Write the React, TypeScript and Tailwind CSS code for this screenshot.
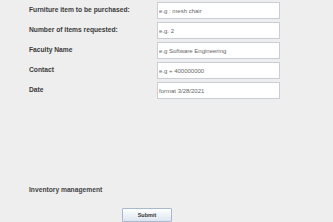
import React from "react";

const FIELDS = [
  { label: "Furniture item to be purchased:", placeholder: "e.g : mesh chair" },
  { label: "Number of items requested:", placeholder: "e.g. 2" },
  { label: "Faculty Name", placeholder: "e.g Software Engineering" },
  { label: "Contact", placeholder: "e.g + 400000000" },
  { label: "Date", placeholder: "format 3/28/2021" },
];

export default function App() {
  return (
    <div className="w-[333px] h-[222px] overflow-hidden bg-[#eeeeee] font-['Liberation_Sans',Arial,sans-serif]">
      <div className="flex flex-col gap-[3px] pt-[2px]">
        {FIELDS.map((f) => (
          <div key={f.label} className="flex items-center h-[17px]">
            <label className="w-[157px] pl-[29px] text-[6.7px] font-bold text-[#3a3a3a] whitespace-nowrap">
              {f.label}
            </label>
            <input
              type="text"
              placeholder={f.placeholder}
              className="w-[123px] h-[17px] bg-white border border-[#c9ced6] px-[1px] text-[6px] text-[#555] placeholder:text-[#666] outline-none"
            />
          </div>
        ))}
      </div>
      <p className="mt-[86px] pl-[29px] text-[6.7px] font-bold text-[#444444]">
        Inventory management
      </p>
      <div className="flex mt-[13px] pl-[122px]">
        <button className="w-[50px] h-[14px] border border-[#a9b8cc] rounded-[1px] bg-gradient-to-b from-white to-[#dce5f0] text-[5.5px] font-bold text-[#333]">
          Submit
        </button>
      </div>
    </div>
  );
}
